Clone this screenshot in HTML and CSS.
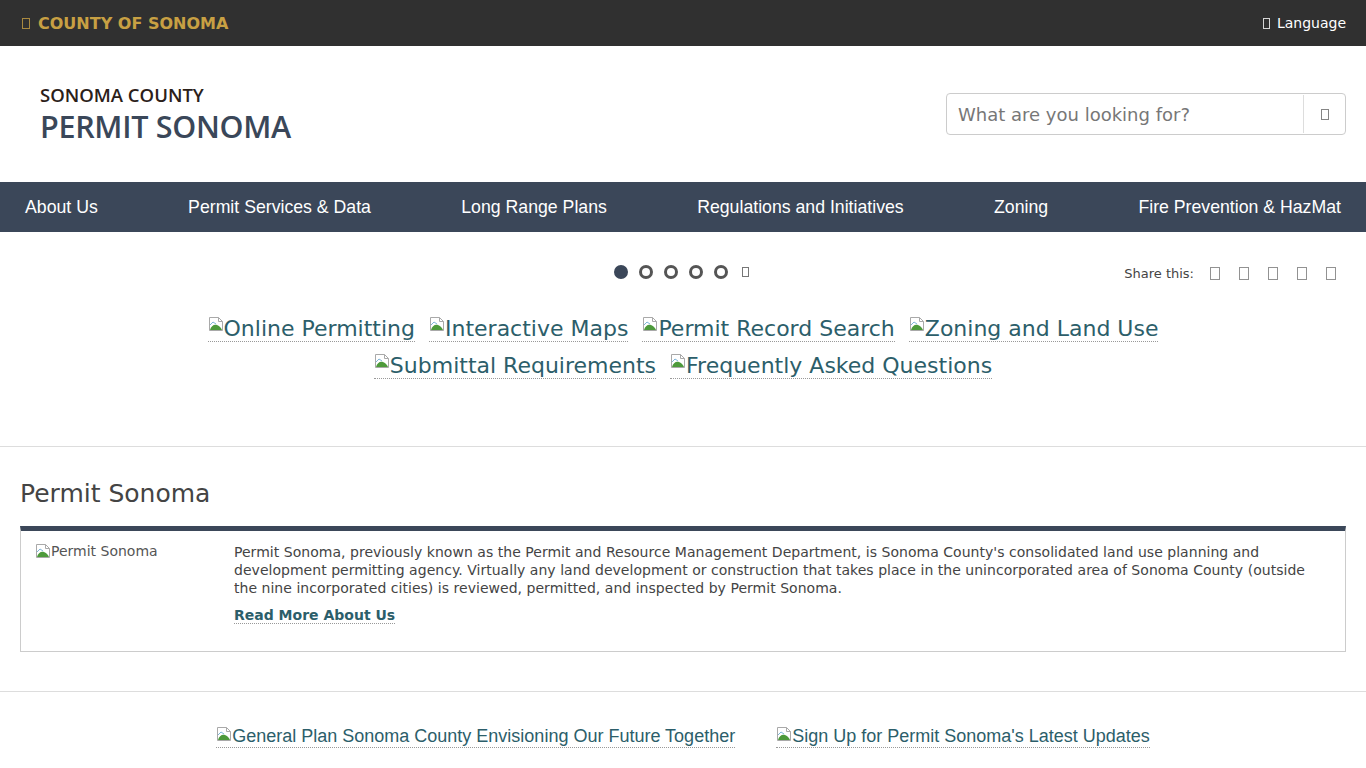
FILE: index.html
```html
<!DOCTYPE html>
<html lang="en">
<head>
<meta charset="utf-8">
<title>Permit Sonoma</title>
<link rel="stylesheet" href="styles.css">
</head>
<body>
<header class="topbar">
  <a class="county" href="#"><span class="tofu"></span>COUNTY OF SONOMA</a>
  <a class="lang" href="#"><span class="tofu"></span>Language</a>
</header>

<div class="masthead">
  <a class="logo" href="#">
    <span class="logo-sub">SONOMA COUNTY</span>
    <span class="logo-main">PERMIT SONOMA</span>
  </a>
  <form class="search">
    <input type="text" placeholder="What are you looking for?">
    <button type="button"><span class="tofu"></span></button>
  </form>
</div>

<nav class="mainnav">
  <a href="#">About Us</a>
  <a href="#">Permit Services &amp; Data</a>
  <a href="#">Long Range Plans</a>
  <a href="#">Regulations and Initiatives</a>
  <a href="#">Zoning</a>
  <a href="#">Fire Prevention &amp; HazMat</a>
</nav>

<section class="hero">
  <div class="hero-tools">
    <div></div>
    <div class="dots">
      <span class="dot active"></span>
      <span class="dot"></span>
      <span class="dot"></span>
      <span class="dot"></span>
      <span class="dot"></span>
      <span class="tofu pause"></span>
    </div>
    <div class="share">
      <span class="share-label">Share this:</span>
      <span class="tofu"></span>
      <span class="tofu"></span>
      <span class="tofu"></span>
      <span class="tofu"></span>
      <span class="tofu"></span>
    </div>
  </div>
  <div class="quicklinks">
    <div class="ql-row">
      <a href="#"><svg class="broken" viewBox="0 0 16 16"><path d="M1.5 1.5h9l4 4v9h-13z" fill="#fff" stroke="#a9a9a9"/><path d="M10.5 1.5v4h4" fill="none" stroke="#a9a9a9"/><path d="M2 14c1-4 4-6 7-5s4 3 5 5z" fill="#4d9a3b"/><path d="M2 9l3-3 3 2" fill="none" stroke="#7fb5d9"/></svg>Online Permitting</a>
      <a href="#"><svg class="broken" viewBox="0 0 16 16"><path d="M1.5 1.5h9l4 4v9h-13z" fill="#fff" stroke="#a9a9a9"/><path d="M10.5 1.5v4h4" fill="none" stroke="#a9a9a9"/><path d="M2 14c1-4 4-6 7-5s4 3 5 5z" fill="#4d9a3b"/><path d="M2 9l3-3 3 2" fill="none" stroke="#7fb5d9"/></svg>Interactive Maps</a>
      <a href="#"><svg class="broken" viewBox="0 0 16 16"><path d="M1.5 1.5h9l4 4v9h-13z" fill="#fff" stroke="#a9a9a9"/><path d="M10.5 1.5v4h4" fill="none" stroke="#a9a9a9"/><path d="M2 14c1-4 4-6 7-5s4 3 5 5z" fill="#4d9a3b"/><path d="M2 9l3-3 3 2" fill="none" stroke="#7fb5d9"/></svg>Permit Record Search</a>
      <a href="#"><svg class="broken" viewBox="0 0 16 16"><path d="M1.5 1.5h9l4 4v9h-13z" fill="#fff" stroke="#a9a9a9"/><path d="M10.5 1.5v4h4" fill="none" stroke="#a9a9a9"/><path d="M2 14c1-4 4-6 7-5s4 3 5 5z" fill="#4d9a3b"/><path d="M2 9l3-3 3 2" fill="none" stroke="#7fb5d9"/></svg>Zoning and Land Use</a>
    </div>
    <div class="ql-row">
      <a href="#"><svg class="broken" viewBox="0 0 16 16"><path d="M1.5 1.5h9l4 4v9h-13z" fill="#fff" stroke="#a9a9a9"/><path d="M10.5 1.5v4h4" fill="none" stroke="#a9a9a9"/><path d="M2 14c1-4 4-6 7-5s4 3 5 5z" fill="#4d9a3b"/><path d="M2 9l3-3 3 2" fill="none" stroke="#7fb5d9"/></svg>Submittal Requirements</a>
      <a href="#"><svg class="broken" viewBox="0 0 16 16"><path d="M1.5 1.5h9l4 4v9h-13z" fill="#fff" stroke="#a9a9a9"/><path d="M10.5 1.5v4h4" fill="none" stroke="#a9a9a9"/><path d="M2 14c1-4 4-6 7-5s4 3 5 5z" fill="#4d9a3b"/><path d="M2 9l3-3 3 2" fill="none" stroke="#7fb5d9"/></svg>Frequently Asked Questions</a>
    </div>
  </div>
</section>

<section class="intro">
  <h2>Permit Sonoma</h2>
  <div class="card">
    <div class="card-img"><svg class="broken small" viewBox="0 0 16 16"><path d="M1.5 1.5h9l4 4v9h-13z" fill="#fff" stroke="#a9a9a9"/><path d="M10.5 1.5v4h4" fill="none" stroke="#a9a9a9"/><path d="M2 14c1-4 4-6 7-5s4 3 5 5z" fill="#4d9a3b"/><path d="M2 9l3-3 3 2" fill="none" stroke="#7fb5d9"/></svg>Permit Sonoma</div>
    <div class="card-body">
      <p>Permit Sonoma, previously known as the Permit and Resource Management Department, is Sonoma County's consolidated land use planning and development permitting agency. Virtually any land development or construction that takes place in the unincorporated area of Sonoma County (outside the nine incorporated cities) is reviewed, permitted, and inspected by Permit Sonoma.</p>
      <a class="more" href="#">Read More About Us</a>
    </div>
  </div>
</section>

<section class="promos">
  <a href="#"><svg class="broken small" viewBox="0 0 16 16"><path d="M1.5 1.5h9l4 4v9h-13z" fill="#fff" stroke="#a9a9a9"/><path d="M10.5 1.5v4h4" fill="none" stroke="#a9a9a9"/><path d="M2 14c1-4 4-6 7-5s4 3 5 5z" fill="#4d9a3b"/><path d="M2 9l3-3 3 2" fill="none" stroke="#7fb5d9"/></svg>General Plan Sonoma County Envisioning Our Future Together</a>
  <a href="#"><svg class="broken small" viewBox="0 0 16 16"><path d="M1.5 1.5h9l4 4v9h-13z" fill="#fff" stroke="#a9a9a9"/><path d="M10.5 1.5v4h4" fill="none" stroke="#a9a9a9"/><path d="M2 14c1-4 4-6 7-5s4 3 5 5z" fill="#4d9a3b"/><path d="M2 9l3-3 3 2" fill="none" stroke="#7fb5d9"/></svg>Sign Up for Permit Sonoma's Latest Updates</a>
</section>
</body>
</html>
```

FILE: styles.css
```css
* { box-sizing: border-box; }
html, body { margin: 0; padding: 0; background: #fff; }
body {
  font-family: "DejaVu Sans", Verdana, sans-serif;
  color: #444;
  overflow: hidden;
}
a { text-decoration: none; }

.tofu {
  display: inline-block;
  width: 8px;
  height: 12px;
  border: 1px solid currentColor;
  opacity: 0.8;
  vertical-align: -1px;
}

/* top bar */
.topbar {
  height: 46px;
  background: #303030;
  display: flex;
  align-items: center;
  justify-content: space-between;
  padding: 0 20px 0 22px;
}
.county {
  color: #c8a043;
  font-family: "DejaVu Sans", sans-serif;
  font-weight: bold;
  font-size: 16px;
  display: flex;
  align-items: center;
  gap: 8px;
  margin-top: 1px;
}
.county .tofu { width: 8px; height: 11px; }
.lang {
  color: #fff;
  font-family: "DejaVu Sans", sans-serif;
  font-size: 14px;
  display: flex;
  align-items: center;
  gap: 7px;
}
.lang .tofu { width: 7px; height: 11px; }

/* masthead */
.masthead {
  height: 136px;
  display: flex;
  align-items: center;
  justify-content: space-between;
  padding: 0 20px 0 40px;
}
.logo {
  display: flex;
  flex-direction: column;
  font-family: "Open Sans", sans-serif;
  margin-top: 2px;
}
.logo-sub {
  color: #2b2019;
  font-weight: 600;
  font-size: 18.5px;
  line-height: 22px;
}
.logo-main {
  color: #3a4759;
  font-weight: 600;
  font-size: 30.5px;
  line-height: 40px;
  letter-spacing: -0.3px;
}
.search {
  width: 400px;
  height: 42px;
  display: flex;
  border: 1px solid #ccc;
  border-radius: 4px;
}
.search input {
  flex: 1;
  border: 0;
  background: transparent;
  padding: 0 11px;
  font-family: "DejaVu Sans", sans-serif;
  font-size: 18px;
  color: #555;
  outline: none;
}
.search input::placeholder { color: #777; }
.search button {
  width: 42px;
  border: 0;
  border-left: 1px solid #ddd;
  background: transparent;
  color: #666;
  padding: 0;
  margin: 1px 0;
}
.search button .tofu { width: 8px; height: 11px; }

/* nav */
.mainnav {
  height: 50px;
  background: #3b4759;
  display: flex;
  align-items: center;
  justify-content: space-between;
  padding: 0 25px;
}
.mainnav a {
  color: #fff;
  font-family: "Liberation Sans", Arial, sans-serif;
  font-size: 17.7px;
  margin-top: 1px;
}

/* hero */
.hero {
  height: 215px;
  border-bottom: 1px solid #ddd;
  padding-top: 30px;
}
.hero-tools {
  display: grid;
  grid-template-columns: 1fr auto 1fr;
  align-items: center;
  height: 20px;
}
.dots {
  display: flex;
  align-items: center;
  gap: 11px;
  padding-right: 3px;
}
.dot {
  width: 14px;
  height: 14px;
  border-radius: 50%;
  border: 3px solid #555;
}
.dot.active { background: #3b4759; border-color: #3b4759; }
.dots .pause { color: #555; width: 7px; height: 10px; margin-left: 3px; }
.share {
  justify-self: end;
  padding-right: 30px;
  display: flex;
  align-items: center;
  color: #555;
  margin-top: 3px;
}
.share-label { font-size: 13px; margin-right: 16px; color: #444; }
.share .tofu { width: 10px; height: 13px; margin-right: 19px; color: #777; }
.share .tofu:last-child { margin-right: 0; }

.quicklinks {
  margin-top: 28px;
  display: flex;
  flex-direction: column;
  align-items: center;
}
.ql-row {
  display: flex;
  gap: 14px;
  height: 37px;
  align-items: center;
}
.ql-row a {
  color: #2c5e6a;
  font-size: 22px;
  border-bottom: 1px dotted #999;
  line-height: 25px;
  display: flex;
  align-items: flex-start;
}
.broken {
  width: 16px;
  height: 16px;
  flex: none;
}

/* intro */
.intro { padding: 31px 20px 39px; border-bottom: 1px solid #ddd; }
.intro h2 {
  margin: 0 0 16px;
  font-weight: normal;
  font-size: 25px;
  line-height: 32px;
  color: #444;
}
.card {
  border: 1px solid #ccc;
  border-top: 5px solid #3b4759;
  padding: 12px 15px 20px;
  display: flex;
  min-height: 126px;
}
.card-img {
  width: 198px;
  flex: none;
  font-size: 14px;
  color: #555;
  display: flex;
  align-items: flex-start;
  margin-left: -1px;
}
.card-body { margin-left: 1px; padding-right: 12px; }
.card-body p {
  margin: 0 0 8px;
  font-family: "DejaVu Sans", sans-serif;
  font-size: 14px;
  line-height: 18px;
  letter-spacing: 0.03px;
  color: #444;
}
.more {
  font-family: "DejaVu Sans", sans-serif;
  font-weight: bold;
  font-size: 14px;
  color: #2c5e6a;
  border-bottom: 1px dotted #999;
}

/* promos */
.promos {
  display: flex;
  justify-content: center;
  gap: 41px;
  padding-top: 34px;
}
.promos a {
  color: #2c5e6a;
  font-family: "Liberation Sans", Arial, sans-serif;
  font-size: 18px;
  border-bottom: 1px dotted #999;
  display: flex;
  align-items: flex-start;
  line-height: 21px;
}
```
